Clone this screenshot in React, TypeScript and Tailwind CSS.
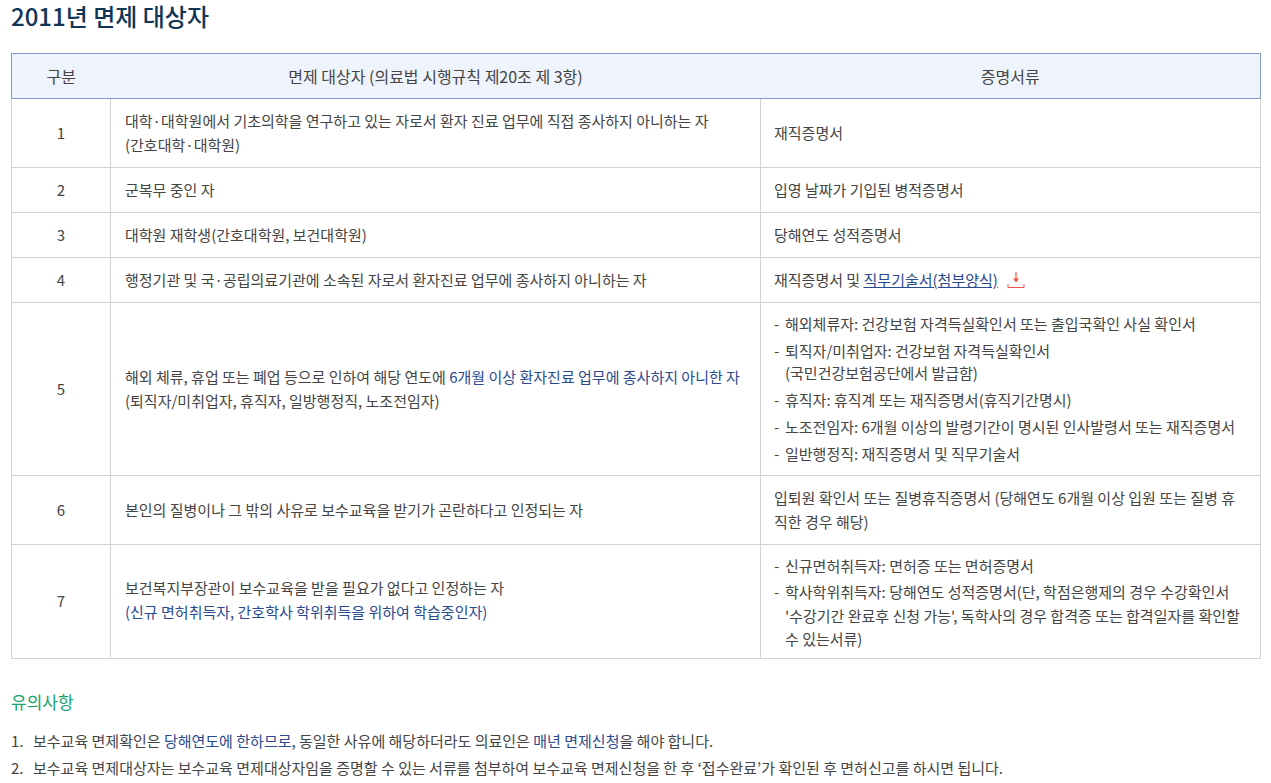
const blue = "text-[#2a4a8f]";

const rows = [
  {
    no: "1",
    h: "h-[69px]",
    noClass: "",
    target: (
      <>
        대학·대학원에서 기초의학을 연구하고 있는 자로서 환자 진료 업무에 직접 종사하지 아니하는 자
        <br />
        (간호대학·대학원)
      </>
    ),
    docs: <>재직증명서</>,
  },
  { no: "2", h: "h-[45px]", noClass: "", target: <>군복무 중인 자</>, docs: <>입영 날짜가 기입된 병적증명서</> },
  { no: "3", h: "h-[45px]", noClass: "", target: <>대학원 재학생(간호대학원, 보건대학원)</>, docs: <>당해연도 성적증명서</> },
  {
    no: "4",
    h: "h-[45px]",
    noClass: "",
    target: <>행정기관 및 국·공립의료기관에 소속된 자로서 환자진료 업무에 종사하지 아니하는 자</>,
    docs: (
      <span className="inline-flex items-center">
        재직증명서 및&nbsp;
        <a className="text-[#2a4a8f] underline">직무기술서(첨부양식)</a>
        <svg className="ml-[9px]" width="18" height="18" viewBox="0 0 18 18" fill="none">
          <path d="M9 1v10" stroke="#f0574a" strokeWidth="1.2" />
          <path d="M6 7.5h6L9 11.5z" fill="#f0574a" />
          <path d="M1 13v3.5h16V13" stroke="#f0574a" strokeWidth="1" />
        </svg>
      </span>
    ),
  },
  {
    no: "5",
    h: "h-[173px]",
    noClass: "",
    target: (
      <>
        해외 체류, 휴업 또는 폐업 등으로 인하여 해당 연도에{" "}
        <span className={blue}>6개월 이상 환자진료 업무에 종사하지 아니한 자</span>
        <br />
        (퇴직자/미취업자, 휴직자, 일방행정직, 노조전임자)
      </>
    ),
    docs: (
      <DashList
        listClass="gap-[5px] leading-[22px]"
        items={[
          <>해외체류자: 건강보험 자격득실확인서 또는 출입국확인 사실 확인서</>,
          <>
            퇴직자/미취업자: 건강보험 자격득실확인서
            <br />
            (국민건강보험공단에서 발급함)
          </>,
          <>휴직자: 휴직계 또는 재직증명서(휴직기간명시)</>,
          <>노조전임자: 6개월 이상의 발령기간이 명시된 인사발령서 또는 재직증명서</>,
          <>일반행정직: 재직증명서 및 직무기술서</>,
        ]}
      />
    ),
  },
  {
    no: "6",
    h: "h-[69px]",
    noClass: "",
    target: <>본인의 질병이나 그 밖의 사유로 보수교육을 받기가 곤란하다고 인정되는 자</>,
    docs: <>입퇴원 확인서 또는 질병휴직증명서 (당해연도 6개월 이상 입원 또는 질병 휴직한 경우 해당)</>,
  },
  {
    no: "7",
    h: "h-[114px]",
    noClass: "pb-[2px]",
    target: (
      <div className="pb-[3px]">
        보건복지부장관이 보수교육을 받을 필요가 없다고 인정하는 자
        <br />
        <span className={blue}>(신규 면허취득자, 간호학사 학위취득을 위하여 학습중인자)</span>
      </div>
    ),
    docs: (
      <DashList
        listClass="gap-[3px] pt-[1px] leading-[23.5px]"
        items={[
          <>신규면허취득자: 면허증 또는 면허증명서</>,
          <>
            학사학위취득자: 당해연도 성적증명서(단, 학점은행제의 경우 수강확인서 &#39;수강기간 완료후 신청 가능&#39;, 독학사의 경우 합격증 또는 합격일자를 확인할 수 있는서류)
          </>,
        ]}
      />
    ),
  },
];

function DashList({ items, listClass }: { items: React.ReactNode[]; listClass: string }) {
  return (
    <ul className={`flex flex-col ${listClass}`}>
      {items.map((item, i) => (
        <li key={i} className="flex">
          <span className="w-[11px] shrink-0">-</span>
          <span>{item}</span>
        </li>
      ))}
    </ul>
  );
}

export default function App() {
  return (
    <div className="h-screen overflow-hidden bg-white px-[11px] text-[15px] leading-[24px] text-[#444] font-['Noto_Sans_CJK_KR','Noto_Sans',sans-serif]">
      <h2 className="h-[53px] text-[24px] leading-[32px] font-medium text-[#0f3557]">2011년 면제 대상자</h2>

      <table className="w-[1249px] table-fixed border-collapse">
        <colgroup>
          <col className="w-[99px]" />
          <col className="w-[650px]" />
          <col className="w-[500px]" />
        </colgroup>
        <thead>
          <tr className="h-[45px] bg-[#eff3fb] text-[16px]">
            <th className="border-y border-l border-[#7f9ccb] font-normal">구분</th>
            <th className="border-y border-[#7f9ccb] font-normal">면제 대상자 (의료법 시행규칙 제20조 제 3항)</th>
            <th className="border-y border-r border-[#7f9ccb] font-normal">증명서류</th>
          </tr>
        </thead>
        <tbody>
          {rows.map((row) => (
            <tr key={row.no} className={row.h}>
              <td className={`border border-[#d2d2d2] text-center ${row.noClass}`}>{row.no}</td>
              <td className="border border-[#d2d2d2] px-[14px]">{row.target}</td>
              <td className="border border-[#d2d2d2] px-[13px]">{row.docs}</td>
            </tr>
          ))}
        </tbody>
      </table>

      <h3 className="mt-[30px] text-[17px] leading-[26px] font-normal text-[#1aa36f]">유의사항</h3>
      <ol className="mt-[14px] flex flex-col gap-[3px]">
        <li className="flex">
          <span className="w-[22px] shrink-0">1.</span>
          <span>
            보수교육 면제확인은 <span className={blue}>당해연도에 한하므로,</span> 동일한 사유에 해당하더라도 의료인은{" "}
            <span className={blue}>매년 면제신청</span>을 해야 합니다.
          </span>
        </li>
        <li className="flex">
          <span className="w-[22px] shrink-0">2.</span>
          <span>
            보수교육 면제대상자는 보수교육 면제대상자임을 증명할 수 있는 서류를 첨부하여 보수교육 면제신청을 한 후 ‘접수완료’가 확인된 후 면허신고를 하시면 됩니다.
          </span>
        </li>
      </ol>
    </div>
  );
}
